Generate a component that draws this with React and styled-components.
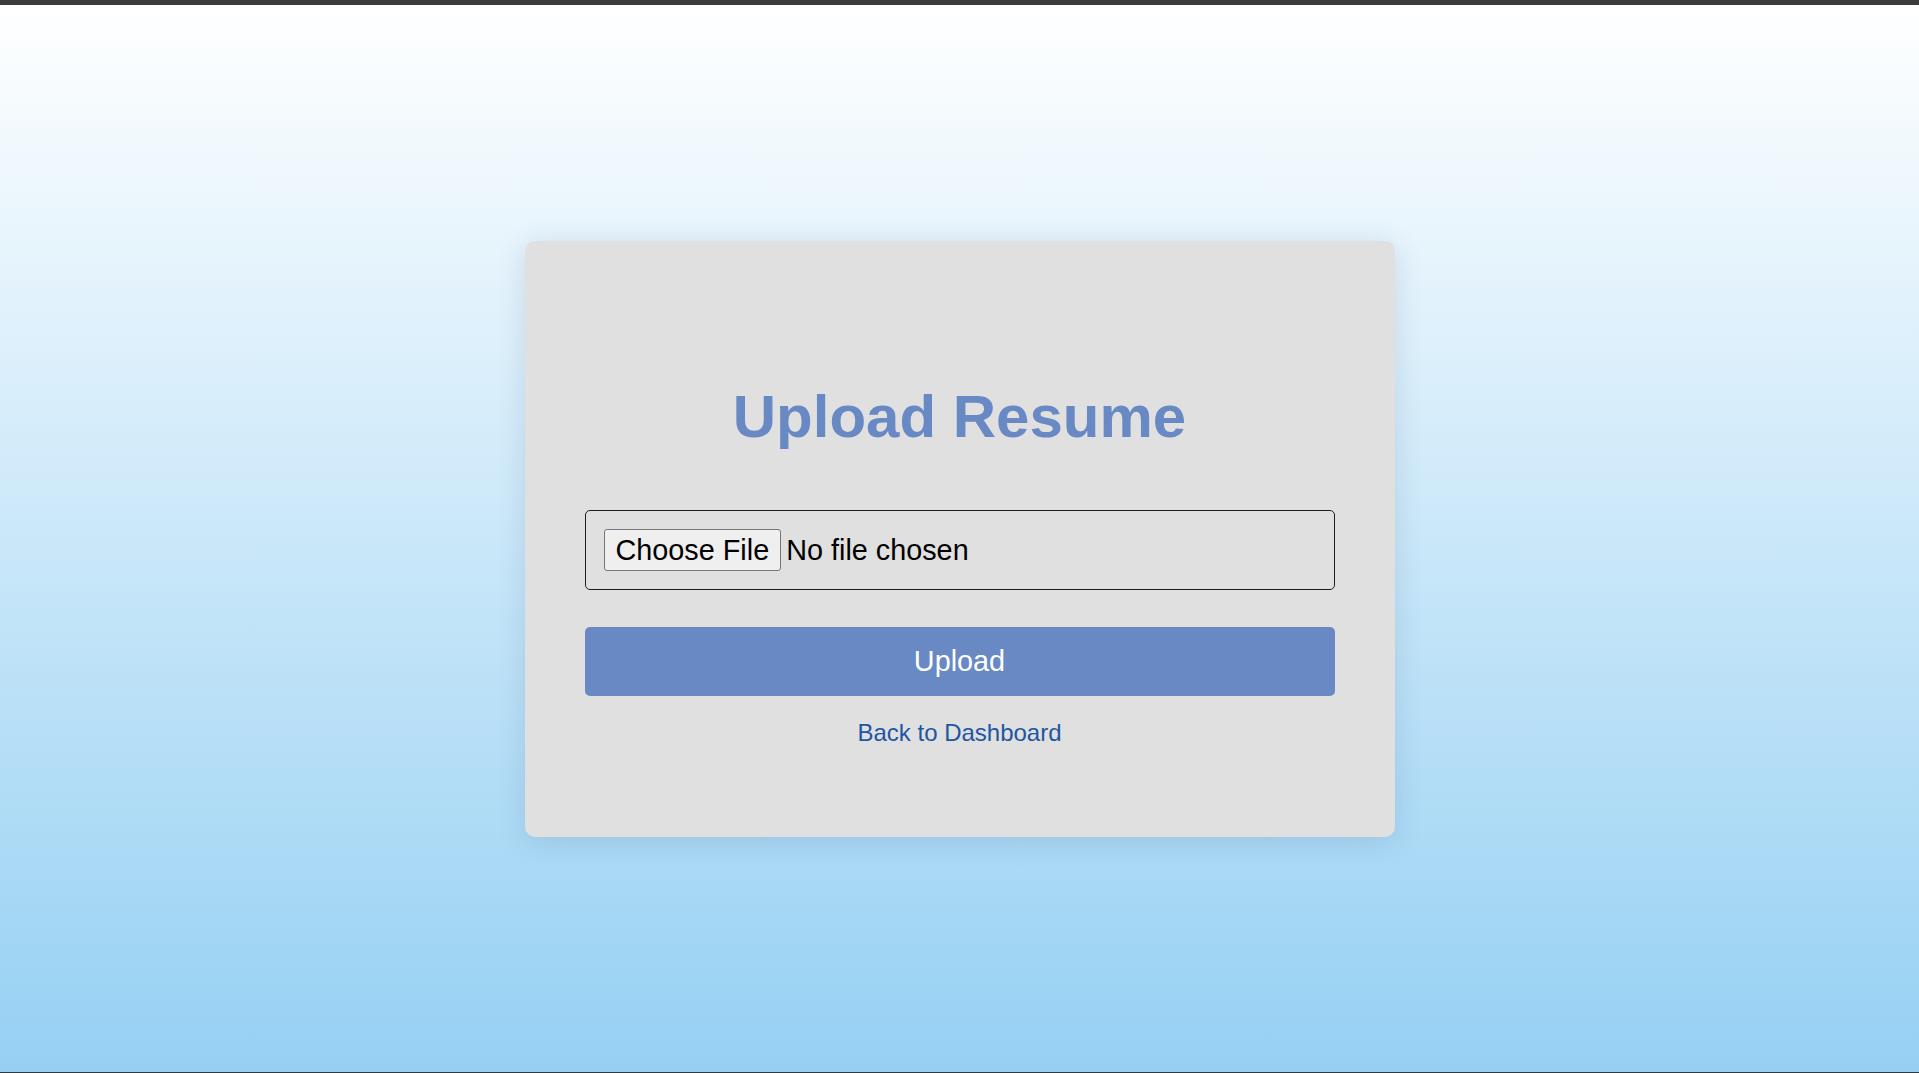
import React from "react";
import styled, { createGlobalStyle } from "styled-components";

const GlobalStyle = createGlobalStyle`
  * { box-sizing: border-box; }
  html, body { margin: 0; padding: 0; height: 100%; }
  body { font-family: "Liberation Sans", Arial, sans-serif; }
  #root { height: 100%; }
`;

const Page = styled.div`
  min-height: 100vh;
  display: flex;
  flex-direction: column;
`;

const TopBar = styled.div`
  height: 5px;
  background: #3c3c3c;
  flex: none;
`;

const Main = styled.main`
  flex: 1;
  display: flex;
  align-items: center;
  justify-content: center;
  background: linear-gradient(to bottom, #ffffff 0%, #95d0f3 100%);
`;

const BottomLine = styled.div`
  height: 1px;
  background: #2f3a40;
  flex: none;
`;

const Card = styled.section`
  width: 870px;
  background: #e0e0e0;
  border-radius: 10px;
  box-shadow: 0 4px 30px rgba(20, 60, 100, 0.14);
  padding: 60px 60px 90px;
  display: flex;
  flex-direction: column;
  align-items: stretch;
`;

const Title = styled.h1`
  margin: 81px 0 59px;
  text-align: center;
  font-size: 60px;
  line-height: 69px;
  font-weight: 700;
  color: #6889c4;
`;

const FileField = styled.label`
  display: flex;
  align-items: center;
  height: 80px;
  padding: 0 18px;
  border: 1px solid #1c1c1c;
  border-radius: 5px;
  background: #e0e0e0;
  font-size: 28.8px;
  color: #000;
  cursor: pointer;
  margin-bottom: 37px;
`;

const HiddenInput = styled.input`
  position: absolute;
  width: 1px;
  height: 1px;
  opacity: 0;
  pointer-events: none;
`;

const FileButton = styled.span`
  display: inline-block;
  padding: 3px 11px;
  line-height: 34px;
  background: #efefef;
  border: 1px solid #767676;
  border-radius: 3px;
  margin-right: 5px;
  white-space: nowrap;
`;

const FileName = styled.span`
  line-height: 34px;
  white-space: nowrap;
`;

const UploadButton = styled.button`
  height: 69px;
  border: none;
  border-radius: 5px;
  background: #6889c3;
  color: #ffffff;
  font-family: "Liberation Sans", Arial, sans-serif;
  font-size: 28.8px;
  line-height: 33px;
  cursor: pointer;
`;

const BackLink = styled.a`
  align-self: center;
  margin-top: 23px;
  font-size: 24px;
  line-height: 28px;
  color: #1f56a1;
  text-decoration: none;
`;

export default function App() {
  return (
    <>
      <GlobalStyle />
      <Page>
        <TopBar />
        <Main>
          <Card>
            <Title>Upload Resume</Title>
            <FileField>
              <HiddenInput type="file" />
              <FileButton>Choose File</FileButton>
              <FileName>No file chosen</FileName>
            </FileField>
            <UploadButton type="button">Upload</UploadButton>
            <BackLink href="#">Back to Dashboard</BackLink>
          </Card>
        </Main>
        <BottomLine />
      </Page>
    </>
  );
}
